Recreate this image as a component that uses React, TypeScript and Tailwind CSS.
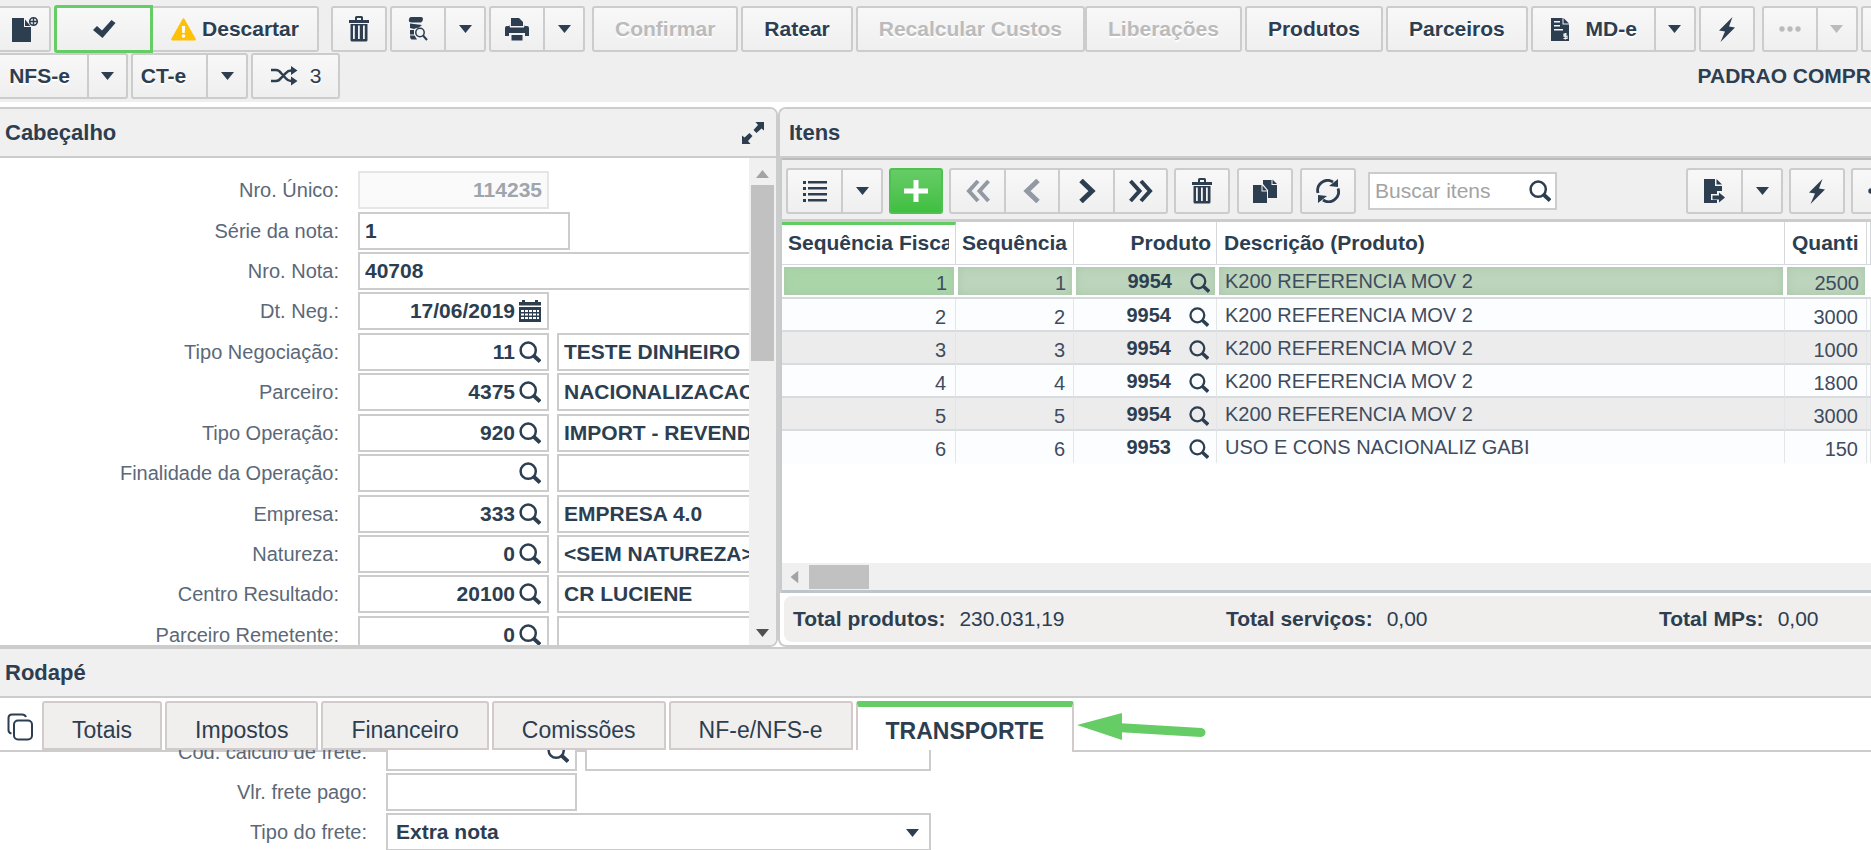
import type { ReactNode } from 'react';

const items = [
  { seq: 1, product: '9954', description: 'K200 REFERENCIA MOV 2', quantity: 2500 },
  { seq: 2, product: '9954', description: 'K200 REFERENCIA MOV 2', quantity: 3000 },
  { seq: 3, product: '9954', description: 'K200 REFERENCIA MOV 2', quantity: 1000 },
  { seq: 4, product: '9954', description: 'K200 REFERENCIA MOV 2', quantity: 1800 },
  { seq: 5, product: '9954', description: 'K200 REFERENCIA MOV 2', quantity: 3000 },
  { seq: 6, product: '9953', description: 'USO E CONS NACIONALIZ GABI', quantity: 150 },
];

const lookups = [
  { id: 'tipo-negociacao', label: 'Tipo Negociação:', code: '11', name: 'TESTE DINHEIRO' },
  { id: 'parceiro', label: 'Parceiro:', code: '4375', name: 'NACIONALIZACAO' },
  { id: 'tipo-operacao', label: 'Tipo Operação:', code: '920', name: 'IMPORT - REVENDA' },
  { id: 'finalidade', label: 'Finalidade da Operação:', code: '', name: '' },
  { id: 'empresa', label: 'Empresa:', code: '333', name: 'EMPRESA 4.0' },
  { id: 'natureza', label: 'Natureza:', code: '0', name: '<SEM NATUREZA>' },
  { id: 'centro-resultado', label: 'Centro Resultado:', code: '20100', name: 'CR LUCIENE' },
  { id: 'parceiro-remetente', label: 'Parceiro Remetente:', code: '0', name: '' },
];

const totals = [
  { label: 'Total produtos:', value: '230.031,19' },
  { label: 'Total serviços:', value: '0,00' },
  { label: 'Total MPs:', value: '0,00' },
];

const tabs = ['Totais', 'Impostos', 'Financeiro', 'Comissões', 'NF-e/NFS-e'];

/* ---------- icons ---------- */

function Icon({ w, h, children }: { w: number; h: number; children: ReactNode }) {
  return (
    <svg width={w} height={h} viewBox={`0 0 ${w} ${h}`} fill="currentColor" className="shrink-0" aria-hidden="true">
      {children}
    </svg>
  );
}

const Caret = () => (
  <Icon w={13} h={8}>
    <path d="M0 0h13L6.500 8z" />
  </Icon>
);

const NewDoc = () => (
  <Icon w={28} h={27}>
    <path d="M1 2h12v9h7v15H1z" />
    <path d="M14 3.500l5.500 6.500h-5.500z" />
    <circle cx="22.500" cy="5.500" r="3.800" fill="none" stroke="currentColor" strokeWidth="1.600" />
    <path d="M21.800 2h1.400v7h-1.400zM19 4.800h7v1.400h-7z" />
  </Icon>
);

const Check = () => (
  <Icon w={24} h={20}>
    <path d="M1 11l4-4 5 4.500L19.500 1 23.500 4 10.500 19z" />
  </Icon>
);

const Warning = () => (
  <Icon w={25} h={23}>
    <path d="M11.500 1q1-1.500 2 0L24.800 21q.4 1.500-1.200 1.500H1.400Q-.2 22.500.2 21z" fill="#ffc107" />
    <path d="M10.800 8h3.400l-.5 7h-2.400z" fill="#fff" />
    <circle cx="12.500" cy="18" r="1.800" fill="#fff" />
  </Icon>
);

const Trash = () => (
  <Icon w={20} h={26}>
    <path d="M6 4V1.500Q6 0 7.500 0h5Q14 0 14 1.500V4h-2V2H8v2z" />
    <path d="M0 4h20v3H0z" />
    <path d="M1.500 8h17v16q0 1.500-1.500 1.500H3q-1.500 0-1.500-1.500zm2.500 1.500v13.500h1.800V9.500zm5 0v13.500h1.800V9.500zm5 0v13.500h1.800V9.500z" fillRule="evenodd" />
  </Icon>
);

const StackSearch = () => (
  <Icon w={20} h={24}>
    <path d="M3 0h10q2 0 2 2t-2 3.500H4Q0 5.500 1 2 1.500 0 3 0z" />
    <path d="M2 6.500l12 1.500-3 2.500Q7 11 6 12L2 11z" />
    <path d="M2 13h4v4.500H2zM2 18.500h4.500L9 22.500H4q-2 0-2-4z" />
    <circle cx="12" cy="15.500" r="4.200" fill="none" stroke="currentColor" strokeWidth="1.500" />
    <path d="M15 18.500l4 4.500" stroke="currentColor" strokeWidth="2" />
  </Icon>
);

const Printer = () => (
  <Icon w={24} h={24}>
    <path d="M6 9V1h8l4 4v4z" />
    <path d="M4 9V7.500l1 3h14l1-3V9h2q2 0 2 2v8h-4v-3H4v3H0v-8q0-2 2-2z" />
    <path d="M6.500 18h11v5.500h-11z" />
  </Icon>
);

const Shuffle = () => (
  <Icon w={28} h={20}>
    <path d="M1 4h5q3 0 5 3l5 5.500q2 2.500 5 2.500h2M1 15h5q3 0 5-3l5-5q2-2.500 5-2.500h2" fill="none" stroke="currentColor" strokeWidth="2.500" />
    <path d="M21 0l6.500 4.500L21 9zM21 10.500l6.500 4.500L21 19.500z" />
  </Icon>
);

const MdeDoc = () => (
  <Icon w={20} h={25}>
    <path d="M1 1h11.500v6.500H19V24H1z" />
    <path d="M13.500 1L19 6.500h-5.500z" />
    <path d="M4 4h6v1.500H4zM4 8h6v1.500H4zM4 12h9v1.500H4z" fill="#f5f5f5" />
    <path d="M17 17h-3v2.200h3v2.300h-3.500M15.300 16v6.500" fill="none" stroke="#f5f5f5" strokeWidth="1.200" />
  </Icon>
);

const Bolt = () => (
  <Icon w={18} h={25}>
    <path d="M14.500 0L1 13.500l6 1L2.500 25 17 10.500l-6-1z" />
  </Icon>
);

const Dots = () => (
  <Icon w={22} h={6}>
    <circle cx="3" cy="3" r="2.700" />
    <circle cx="11" cy="3" r="2.700" />
    <circle cx="19" cy="3" r="2.700" />
  </Icon>
);

const Expand = () => (
  <Icon w={24} h={24}>
    <path d="M14.500 1H23v8.500l-2.500-2-5 4.500-3-3 4.500-5zM9.500 23H1v-8.500l2.500 2 5-4.500 3 3-4.500 5z" />
  </Icon>
);

const List = () => (
  <Icon w={24} h={22}>
    <path d="M0 1h3v3H0zM0 7h3v3H0zM0 13h3v3H0zM0 19h3v3H0zM5 1h19v2.500H5zM5 7h19v2.500H5zM5 13h19v2.500H5zM5 19h19v2.500H5z" />
  </Icon>
);

const Plus = () => (
  <Icon w={24} h={22}>
    <path d="M9.500 0h5v8.500H24v5h-9.500V22h-5v-8.500H0v-5h9.500z" />
  </Icon>
);

function Chevron({ double, right }: { double?: boolean; right?: boolean }) {
  return (
    <Icon w={26} h={24}>
      <g transform={right ? 'matrix(-1 0 0 1 26 0)' : undefined} fill="none" stroke="currentColor" strokeWidth="4">
        {double ? <path d="M13 2L4 12l9 10M23.500 2l-9 10 9 10" /> : <path d="M19 1.500L8 12l11 10.500" strokeWidth="5" />}
      </g>
    </Icon>
  );
}

const CopyDocs = () => (
  <Icon w={25} h={24}>
    <path d="M0 6h8.500v6.500H14V24H0z" />
    <path d="M9.500 6.500l4.500 5H9.500z" />
    <path d="M10 5V1h8.500v5H24v13h-9v-8z" />
    <path d="M19.500 0.500L24 5h-4.500z" />
  </Icon>
);

const Refresh = () => (
  <Icon w={24} h={24}>
    <path d="M2 14a10 10 0 0 1 15-11M22 9.500a10 10 0 0 1-15 11.500" fill="none" stroke="currentColor" strokeWidth="2.800" />
    <path d="M22 0v8l-9-1zM2 24v-8l9 1z" />
  </Icon>
);

function Search({ size = 22 }: { size?: number }) {
  return (
    <svg width={size} height={size} viewBox="0 0 22 22" fill="none" stroke="currentColor" className="shrink-0" aria-hidden="true">
      <circle cx="9.200" cy="9.200" r="7.600" strokeWidth="2.500" />
      <path d="M14 14l7 6.500" strokeWidth="3.800" />
    </svg>
  );
}

const Calendar = () => (
  <Icon w={22} h={22}>
    <path d="M0 2h3V0h3v2h10V0h3v2h3v3.500H0z" />
    <path d="M0 7h22v15H0zm2 3v2h3v-2zm4 0v2h3v-2zm4 0v2h3v-2zm4 0v2h3v-2zm4 0v2h2v-2zM2 13.500v2h3v-2zm4 0v2h3v-2zm4 0v2h3v-2zm4 0v2h3v-2zm4 0v2h2v-2zM2 17v2h3v-2zm4 0v2h3v-2zm4 0v2h3v-2zm4 0v2h3v-2zm4 0v2h2v-2z" fillRule="evenodd" />
  </Icon>
);

const ExportDoc = () => (
  <Icon w={22} h={25}>
    <path d="M0 0h11v7h7v5h-5v3H7v6h6v3H0z" />
    <path d="M12.500 0L18 5.500h-5.500z" />
    <path d="M8.500 16.500H15v-3l6 5-6 5v-3H8.500z" />
  </Icon>
);

const CopyOutline = () => (
  <Icon w={27} h={28}>
    <g fill="none" stroke="currentColor" strokeWidth="2">
      <rect x="7" y="7.500" width="18" height="19" rx="4" />
      <path d="M19 4Q18 1.500 15 1.500H5Q1.500 1.500 1.500 5v12q0 3 3 3.500" />
    </g>
  </Icon>
);

/* ---------- controls ---------- */

const face = 'flex shrink-0 items-center justify-center border-2 border-[#ccc] bg-linear-to-b from-[#f8f8f8] to-[#efefef] [text-shadow:0_2px_0_#fff]';

function Btn({ label, className = '', disabled, children }: { label?: string; className?: string; disabled?: boolean; children: ReactNode }) {
  return (
    <button type="button" aria-label={label} disabled={disabled} className={`${face} h-[46px] ${disabled ? 'text-[#bbb]' : ''} ${className}`}>
      {children}
    </button>
  );
}

function Split({ label, className = '', disabled, children }: { label: string; className?: string; disabled?: boolean; children: ReactNode }) {
  return (
    <div className="flex shrink-0">
      <Btn label={label} disabled={disabled} className={`rounded-l-[3px] border-r-0 ${disabled ? 'text-[#9299a3]' : ''} ${className}`}>
        {children}
      </Btn>
      <Btn label={`${label} opções`} disabled={disabled} className="w-[42px] rounded-r-[3px]">
        <Caret />
      </Btn>
    </div>
  );
}

function Field({ id, label, children }: { id: string; label: string; children: ReactNode }) {
  return (
    <div className="flex min-w-0 items-center gap-2">
      <label htmlFor={id} className="mr-[11px] w-[339px] shrink-0 text-right text-[20px] text-[#5b6878]">
        {label}
      </label>
      {children}
    </div>
  );
}

const box = 'h-[38px] border-2 border-[#ccc] bg-white';

function CodeBox({ id, value, icon, label }: { id: string; value: string; icon: ReactNode; label: string }) {
  return (
    <div className={`${box} flex w-[191px] shrink-0 items-center gap-1 pr-[6px]`}>
      <input id={id} defaultValue={value} className="min-w-0 flex-1 bg-transparent text-right font-bold outline-none" />
      <button type="button" aria-label={label}>
        {icon}
      </button>
    </div>
  );
}

/* ---------- sections ---------- */

function TopToolbar() {
  return (
    <header className="h-[102px] shrink-0 overflow-hidden bg-[#efefef] pt-[5px] font-bold">
      <div className="flex items-center gap-[3px]">
        <Btn label="Novo" className="w-[51px] rounded-r-[3px] border-l-0">
          <NewDoc />
        </Btn>
        <div className="mr-[9px] flex items-center">
          <button type="button" aria-label="Salvar" className="flex h-12 w-[99px] items-center justify-center rounded-l-[3px] border-[3px] border-[#66cc66] bg-linear-to-b from-[#f8f8f8] to-[#efefef]">
            <Check />
          </button>
          <Btn className="w-[166px] gap-[6px] rounded-r-[3px] border-l-0">
            <Warning />
            Descartar
          </Btn>
        </div>
        <Btn label="Excluir" className="w-14 rounded-[3px]">
          <Trash />
        </Btn>
        <Split label="Consultar" className="w-[54px]">
          <StackSearch />
        </Split>
        <Split label="Imprimir" className="w-[54px]">
          <Printer />
        </Split>
        <Btn disabled className="ml-1 rounded-[3px] px-[21px]">Confirmar</Btn>
        <Btn className="rounded-[3px] px-[21px]">Ratear</Btn>
        <div className="flex shrink-0">
          <Btn disabled className="rounded-[3px] px-[21px]">Recalcular Custos</Btn>
          <Btn disabled className="rounded-[3px] px-[21px]">Liberações</Btn>
        </div>
        <Btn className="rounded-[3px] px-[21px]">Produtos</Btn>
        <Btn className="rounded-[3px] px-[21px]">Parceiros</Btn>
        <Split label="MD-e" className="w-[123px] gap-4">
          <MdeDoc />
          MD-e
        </Split>
        <Btn label="Ações" className="mr-1 w-14 rounded-[3px]">
          <Bolt />
        </Btn>
        <Split label="Mais" disabled className="w-[54px]">
          <Dots />
        </Split>
        <Btn label="Próximo" className="w-14 rounded-[3px]">{null}</Btn>
      </div>
      <div className="flex items-center gap-[3px]">
        <div className="flex">
          <Btn className="w-[87px] border-l-0 border-r-0 pr-2">NFS-e</Btn>
          <Btn label="NFS-e opções" className="w-[41px] rounded-r-[3px]">
            <Caret />
          </Btn>
        </div>
        <Split label="CT-e" className="w-[75px] pr-3">CT-e</Split>
        <Btn className="w-[89px] gap-3 rounded-[3px]">
          <Shuffle />
          <span className="font-normal">3</span>
        </Btn>
        <span className="ml-auto whitespace-nowrap">PADRAO COMPR</span>
      </div>
    </header>
  );
}

function PanelTitle({ children, action }: { children: ReactNode; action?: ReactNode }) {
  return (
    <div className="flex h-[49px] shrink-0 items-center justify-between border-b-2 border-[#ccc] bg-[#f0f0f0] pl-[5px] pr-[11px] text-[22px] font-bold">
      <h2>{children}</h2>
      {action}
    </div>
  );
}

function HeaderPanel() {
  return (
    <section className="flex min-w-0 flex-col overflow-hidden rounded-r-lg border-y-2 border-r-2 border-[#ccc]">
      <PanelTitle
        action={
          <button type="button" aria-label="Expandir">
            <Expand />
          </button>
        }
      >
        Cabeçalho
      </PanelTitle>
      <div className="flex min-h-0 flex-1">
        <form className="min-w-0 flex-1 overflow-hidden pt-3">
          <div className="grid h-[485px] grid-cols-1 grid-rows-12">
            <Field id="nro-unico" label="Nro. Único:">
              <input id="nro-unico" disabled defaultValue="114235" className="h-[38px] w-[191px] border-2 border-[#e6e6e6] bg-[#fafafa] pr-[5px] text-right font-bold text-[#9fa5ad]" />
            </Field>
            <Field id="serie" label="Série da nota:">
              <input id="serie" defaultValue="1" className={`${box} w-[212px] px-[5px] font-bold`} />
            </Field>
            <Field id="nro-nota" label="Nro. Nota:">
              <input id="nro-nota" defaultValue="40708" className={`${box} w-[480px] shrink-0 px-[5px] font-bold`} />
            </Field>
            <Field id="dt-neg" label="Dt. Neg.:">
              <CodeBox id="dt-neg" value="17/06/2019" label="Abrir calendário" icon={<Calendar />} />
            </Field>
            {lookups.map((field) => (
              <Field key={field.id} id={field.id} label={field.label}>
                <CodeBox id={field.id} value={field.code} label={`Pesquisar ${field.label}`} icon={<Search />} />
                <input aria-label={`${field.label} descrição`} defaultValue={field.name} className={`${box} w-[320px] shrink-0 px-[5px] font-bold`} />
              </Field>
            ))}
          </div>
        </form>
        <div className="flex w-[27px] shrink-0 flex-col items-center bg-[#f0f0f0] pb-2 pt-3">
          <span className="rotate-180 text-[#a3a3a3]">
            <Caret />
          </span>
          <div className="mt-[7px] h-44 w-[23px] bg-[#c1c1c1]" />
          <span className="mt-auto text-[#505050]">
            <Caret />
          </span>
        </div>
      </div>
    </section>
  );
}

function ItemsTable() {
  return (
    <table className="w-full table-fixed border-separate border-spacing-0 text-[20px]">
      <colgroup>
        <col className="w-[174px]" />
        <col className="w-[118px]" />
        <col className="w-[143px]" />
        <col />
        <col className="w-[82px]" />
        <col className="w-1" />
      </colgroup>
      <thead>
        <tr className="h-[43px] text-[21px] [&>th]:overflow-hidden [&>th]:whitespace-nowrap [&>th]:border-b [&>th]:border-r [&>th]:border-[#d5d9dc] [&>th]:p-0">
          <th className="border-t-[3px] border-t-[#5fcb60]!">
            <div className="mx-[6px] overflow-hidden pb-[3px] text-left">Sequência Fiscal</div>
          </th>
          <th>
            <div className="ml-[6px] text-left">Sequência</div>
          </th>
          <th>
            <div className="mr-[5px] text-right">Produto</div>
          </th>
          <th>
            <div className="ml-[7px] text-left">Descrição (Produto)</div>
          </th>
          <th>
            <div className="mx-[7px] overflow-hidden text-left">Quanti</div>
          </th>
          <th />
        </tr>
      </thead>
      <tbody>
        {items.map((item, index) => {
          const selected = index === 0;
          const row = selected
            ? 'h-[34px] [&>td]:border-b-2 [&>td]:border-[#d5d9dc] [&>td]:shadow-[inset_0_0_0_2px_#fff,inset_0_0_10px_2px_#a9c9a9] [&>td]:bg-[#bdd4bd]'
            : index % 2 === 0
              ? 'h-[33px] bg-[#ececec] [&>td]:border-b-2 [&>td]:border-r [&>td]:border-[#d9dcde] [&>td]:border-r-[#e3e5e7]'
              : 'h-[33px] bg-[#fcfdff] [&>td]:border-b-2 [&>td]:border-r [&>td]:border-[#d9dcde] [&>td]:border-r-[#e3e5e7]';
          return (
            <tr key={item.seq} className={`${row} text-[#3f4c5e] last:[&>td]:border-b-transparent [&>td]:p-0 [&>td]:leading-6`}>
              <td className={`pr-[9px]! pt-1! text-right ${selected ? 'bg-[#a9d5a9]!' : ''}`}>{item.seq}</td>
              <td className="pr-[8px]! pt-1! text-right">{item.seq}</td>
              <td className="pr-[7px]! text-right font-bold text-[#2c3e50]">
                <div className="flex items-center justify-end gap-[18px]">
                  {item.product}
                  <button type="button" aria-label={`Pesquisar produto ${item.seq}`} className="pt-1">
                    <Search size={20} />
                  </button>
                </div>
              </td>
              <td className="pl-[8px]! whitespace-nowrap">{item.description}</td>
              <td className="pr-[8px]! pt-1! text-right">{item.quantity}</td>
              <td />
            </tr>
          );
        })}
      </tbody>
    </table>
  );
}

function ItemsPanel() {
  return (
    <section className="flex min-w-0 flex-col overflow-hidden rounded-l-lg border-y-2 border-l-2 border-[#ccc]">
      <PanelTitle>
        <span className="pl-1">Itens</span>
      </PanelTitle>
      <div className="flex min-h-0 flex-1 flex-col overflow-hidden border-l-2 border-l-[#c6cbce]">
        <div className="flex h-16 shrink-0 items-center gap-[6px] border-b-[3px] border-t-2 border-b-[#ccc] border-t-[#bbb] bg-[#efefef] pl-1 pt-[3px]">
          <Split label="Modo lista" className="w-[55px]">
            <List />
          </Split>
          <button type="button" aria-label="Adicionar item" className="flex h-[46px] w-[54px] items-center justify-center rounded-[3px] border-2 border-[#4fc150] bg-linear-to-b from-[#66cc66] to-[#3fbf40] text-white">
            <Plus />
          </button>
          <div className="flex">
            <Btn disabled label="Primeiro" className="w-[55px] rounded-l-[3px] border-r-0 text-[#9299a3]!">
              <Chevron double />
            </Btn>
            <Btn disabled label="Anterior" className="w-[54px] border-r-0 text-[#9299a3]!">
              <Chevron />
            </Btn>
            <Btn label="Seguinte" className="w-[55px] border-r-0">
              <Chevron right />
            </Btn>
            <Btn label="Último" className="w-[55px] rounded-r-[3px]">
              <Chevron double right />
            </Btn>
          </div>
          <div className="flex gap-[7px]">
            <Btn label="Excluir item" className="w-14 rounded-[3px]">
              <Trash />
            </Btn>
            <Btn label="Duplicar item" className="w-14 rounded-[3px]">
              <CopyDocs />
            </Btn>
            <Btn label="Atualizar" className="w-14 rounded-[3px]">
              <Refresh />
            </Btn>
          </div>
          <div className={`${box} ml-[6px] flex w-[189px] items-center pl-[5px] pr-1`}>
            <input aria-label="Buscar itens" placeholder="Buscar itens" className="min-w-0 flex-1 outline-none placeholder:text-[#a3a3a3]" />
            <button type="button" aria-label="Buscar">
              <Search />
            </button>
          </div>
          <div className="-mr-9 ml-auto flex gap-[6px]">
            <Split label="Exportar" className="w-[55px]">
              <ExportDoc />
            </Split>
            <Btn label="Ações do item" className="w-14 rounded-[3px]">
              <Bolt />
            </Btn>
            <Btn label="Mais opções" className="w-14 rounded-[3px]">
              <Dots />
            </Btn>
          </div>
        </div>
        <div className="min-h-0 flex-1">
          <ItemsTable />
        </div>
        <div className="flex h-[30px] shrink-0 items-center gap-1 border-b-[3px] border-[#bcc5ca] bg-[#f0f0f0] pl-[6px]">
          <span className="rotate-90 text-[#a3a3a3]">
            <Caret />
          </span>
          <div className="ml-1 h-6 w-[60px] bg-[#c1c1c1]" />
        </div>
      </div>
      <div className="my-[3px] ml-1 flex h-[46px] shrink-0 items-center rounded-l-lg bg-[#f0efee] pl-[9px]">
        {totals.map((total) => (
          <p key={total.label} className="w-[433px] shrink-0">
            <strong className="mr-[14px]">{total.label}</strong>
            {total.value}
          </p>
        ))}
      </div>
    </section>
  );
}

function FooterPanel() {
  return (
    <section className="flex min-h-0 flex-1 flex-col border-t-2 border-[#ccc]">
      <PanelTitle>Rodapé</PanelTitle>
      <nav className="flex h-[54px] shrink-0 items-end gap-[3px] border-b-2 border-[#ccc] pl-[7px] text-[23px]">
        <button type="button" aria-label="Copiar" className="mb-[9px] mr-[5px]">
          <CopyOutline />
        </button>
        {tabs.map((tab) => (
          <button key={tab} type="button" className="h-[49px] rounded-t-[3px] border-2 border-[#d2cbc9] bg-[#f0efee] px-7 pt-2">
            {tab}
          </button>
        ))}
        <button type="button" className="relative -mb-[2px] h-[51px] rounded-t-[3px] border-x-2 border-t-[6px] border-x-[#d2cbc9] border-t-[#66cc66] bg-white px-7 pt-[2px] font-bold">
          TRANSPORTE
        </button>
        <svg width="132" height="34" viewBox="0 0 132 34" fill="#66cc66" className="mb-1" aria-hidden="true">
          <path d="M0 13L45 1v27z" />
          <path d="M40 15.500l84 5" stroke="#66cc66" strokeWidth="9" strokeLinecap="round" />
        </svg>
      </nav>
      <form className="relative -mt-[2px] min-h-0 flex-1 overflow-hidden pl-7">
        <div className="-mt-[18px] grid auto-rows-[40px]">
          <Field id="cod-frete" label="Cód. cálculo de frete:">
            <CodeBox id="cod-frete" value="" label="Pesquisar frete" icon={<Search />} />
            <input aria-label="Descrição do frete" className={`${box} w-[346px] px-2 font-bold`} />
          </Field>
          <Field id="vlr-frete" label="Vlr. frete pago:">
            <input id="vlr-frete" className={`${box} w-[191px] px-2 text-right font-bold`} />
          </Field>
          <Field id="tipo-frete" label="Tipo do frete:">
            <div className="relative">
              <select id="tipo-frete" className={`${box} w-[545px] appearance-none px-2 font-bold`}>
                <option>Extra nota</option>
              </select>
              <span className="pointer-events-none absolute right-3 top-4">
                <Caret />
              </span>
            </div>
          </Field>
        </div>
      </form>
    </section>
  );
}

export default function App() {
  return (
    <div className="flex h-screen flex-col overflow-hidden bg-white font-['Liberation_Sans',Arial,sans-serif] text-[21px] leading-6 text-[#2c3e50]">
      <TopToolbar />
      <main className="mt-[5px] grid h-[540px] shrink-0 grid-cols-[778px_minmax(0,1fr)]">
        <HeaderPanel />
        <ItemsPanel />
      </main>
      <FooterPanel />
    </div>
  );
}
